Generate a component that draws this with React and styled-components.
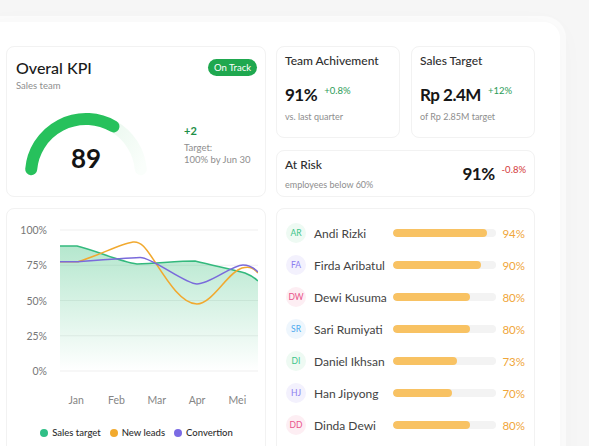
import React from "react";
import styled, { createGlobalStyle } from "styled-components";

const GlobalStyle = createGlobalStyle`
  * { box-sizing: border-box; }
  html, body { margin: 0; padding: 0; }
  body {
    background: #f6f6f6;
    font-family: "Lato", "Noto Sans", sans-serif;
    color: #1c1c1c;
    overflow: hidden;
  }
`;

const members = [
  { initials: "AR", name: "Andi Rizki", value: 94, fill: 90.5, tone: "green" },
  { initials: "FA", name: "Firda Aribatul", value: 90, fill: 85.5, tone: "purple" },
  { initials: "DW", name: "Dewi Kusuma", value: 80, fill: 74, tone: "pink" },
  { initials: "SR", name: "Sari Rumiyati", value: 80, fill: 74, tone: "blue" },
  { initials: "DI", name: "Daniel Ikhsan", value: 73, fill: 61.5, tone: "green" },
  { initials: "HJ", name: "Han Jipyong", value: 70, fill: 56.5, tone: "purple" },
  { initials: "DD", name: "Dinda Dewi", value: 80, fill: 74, tone: "pink" },
];

const tones = {
  green: { bg: "#eefaf3", fg: "#3cc48a" },
  purple: { bg: "#f3f1fd", fg: "#8b7ef0" },
  pink: { bg: "#fdeef3", fg: "#e9558b" },
  blue: { bg: "#eef6fd", fg: "#4aa9ee" },
};

const months = ["Jan", "Feb", "Mar", "Apr", "Mei"];
const yTicks = ["100%", "75%", "50%", "25%", "0%"];

const legend = [
  { label: "Sales target", color: "#2fbf86" },
  { label: "New leads", color: "#f2aa2e" },
  { label: "Convertion", color: "#7b6be4" },
];

export default function App() {
  return (
    <>
      <GlobalStyle />
      <Page>
        <Panel>
          <Board>
            <KpiCard>
              <KpiHeader>
                <div>
                  <KpiTitle>Overal KPI</KpiTitle>
                  <Muted size={9.5}>Sales team</Muted>
                </div>
                <Badge>On Track</Badge>
              </KpiHeader>
              <KpiBody>
                <Gauge>
                  <svg width="130" height="72" viewBox="21 106 130 72">
                    <defs>
                      <linearGradient id="track" x1="0" y1="0" x2="1" y2="1">
                        <stop offset="0" stopColor="#ecf9f0" />
                        <stop offset="1" stopColor="#fafefb" />
                      </linearGradient>
                    </defs>
                    <path
                      d="M113.5 126.4 A55 55 0 0 1 140.8 169.2"
                      fill="none"
                      stroke="url(#track)"
                      strokeWidth="12"
                      strokeLinecap="round"
                    />
                    <path
                      d="M31.2 169.2 A55 55 0 0 1 113.5 126.4"
                      fill="none"
                      stroke="#27c15c"
                      strokeWidth="12"
                      strokeLinecap="round"
                    />
                  </svg>
                  <GaugeValue>89</GaugeValue>
                </Gauge>
                <KpiStats>
                  <Delta>+2</Delta>
                  <Muted size={9.5}>
                    Target:
                    <br />
                    100% by Jun 30
                  </Muted>
                </KpiStats>
              </KpiBody>
            </KpiCard>

            <RightStack>
              <StatRow>
                <StatCard>
                  <CardTitle>Team Achivement</CardTitle>
                  <ValueRow>
                    <BigValue>91%</BigValue>
                    <Change tone="up">+0.8%</Change>
                  </ValueRow>
                  <Muted size={9}>vs. last quarter</Muted>
                </StatCard>
                <StatCard>
                  <CardTitle>Sales Target</CardTitle>
                  <ValueRow>
                    <BigValue>Rp 2.4M</BigValue>
                    <Change tone="up">+12%</Change>
                  </ValueRow>
                  <Muted size={9}>of Rp 2.85M target</Muted>
                </StatCard>
              </StatRow>
              <RiskCard>
                <div>
                  <CardTitle>At Risk</CardTitle>
                  <RiskSub size={9}>employees below 60%</RiskSub>
                </div>
                <ValueRow>
                  <BigValue>91%</BigValue>
                  <Change tone="down">-0.8%</Change>
                </ValueRow>
              </RiskCard>
            </RightStack>

            <ChartCard>
              <Plot>
                <YAxis>
                  {yTicks.map((t) => (
                    <span key={t}>{t}</span>
                  ))}
                </YAxis>
                <svg width="198" height="153" viewBox="60 224 198 153">
                  <defs>
                    <linearGradient id="area" x1="0" y1="0" x2="0" y2="1">
                      <stop offset="0" stopColor="#3cc07e" stopOpacity="0.38" />
                      <stop offset="1" stopColor="#3cc07e" stopOpacity="0" />
                    </linearGradient>
                  </defs>
                  {[230, 265.25, 300.5, 335.75, 371].map((y) => (
                    <line key={y} x1="60" x2="258" y1={y} y2={y} stroke="#efefef" strokeWidth="1" />
                  ))}
                  <path
                    d="M60 246 L77 246 C95 250 120 262 137 264 C160 263 180 261 195 261 C215 266 235 270 245 273 C250 275 254 277 258 281 L258 371 L60 371 Z"
                    fill="url(#area)"
                  />
                  <path
                    d="M60 246 L77 246 C95 250 120 262 137 264 C160 263 180 261 195 261 C215 266 235 270 245 273 C250 275 254 277 258 281"
                    fill="none"
                    stroke="#33b97d"
                    strokeWidth="1.6"
                  />
                  <path
                    d="M60 261.7 L78 261.7 C100 255 120 244 133 242 C142 241 147 250 155 262 C168 282 182 304 197 304 C212 304 228 272 242 268 C250 266 254 268 258 273"
                    fill="none"
                    stroke="#f1a92f"
                    strokeWidth="1.6"
                  />
                  <path
                    d="M60 261.7 L78 261.7 C100 260 125 258 140 257.5 C152 257 185 284 197 284 C210 284 232 265 243 265 C250 265 254 268 258 272"
                    fill="none"
                    stroke="#7a6adb"
                    strokeWidth="1.6"
                  />
                </svg>
              </Plot>
              <XAxis>
                {months.map((m) => (
                  <span key={m}>{m}</span>
                ))}
              </XAxis>
              <Legend>
                {legend.map((l) => (
                  <LegendItem key={l.label}>
                    <Dot color={l.color} />
                    {l.label}
                  </LegendItem>
                ))}
              </Legend>
            </ChartCard>

            <ListCard>
              {members.map((m) => (
                <MemberRow key={m.initials}>
                  <Avatar tone={m.tone}>{m.initials}</Avatar>
                  <MemberName>{m.name}</MemberName>
                  <Track>
                    <Fill style={{ width: `${m.fill}%` }} />
                  </Track>
                  <Percent>{m.value}%</Percent>
                </MemberRow>
              ))}
            </ListCard>
          </Board>
        </Panel>
      </Page>
    </>
  );
}

const Page = styled.div`
  width: 589px;
  height: 446px;
  padding-top: 22px;
  overflow: hidden;
`;

const Panel = styled.div`
  margin-left: -18px;
  width: 578px;
  height: 480px;
  background: #ffffff;
  border-radius: 16px;
  padding: 24px;
  box-shadow: 0 0 0 6px rgba(255, 255, 255, 0.55), 0 6px 28px rgba(0, 0, 0, 0.035);
`;

const Board = styled.div`
  display: grid;
  grid-template-columns: 260px 259px;
  grid-template-rows: 151px 260px;
  column-gap: 10px;
  row-gap: 11px;
`;

const Card = styled.div`
  background: #ffffff;
  border: 1px solid #f2f2f2;
  border-radius: 8px;
`;

const KpiCard = styled(Card)`
  padding: 11px 8px 0 9px;
`;

const KpiHeader = styled.div`
  display: flex;
  justify-content: space-between;
  align-items: flex-start;
`;

const KpiTitle = styled.div`
  font-size: 16px;
  line-height: 20px;
  font-weight: 500;
  color: #1a1a1a;
  margin-bottom: 2px;
`;

const Muted = styled.div`
  font-size: ${(p) => p.size}px;
  line-height: ${(p) => (p.size > 9 ? 12 : 11)}px;
  color: #8e8e8e;
`;

const Badge = styled.div`
  margin-top: 1px;
  height: 17px;
  padding: 0 6px;
  border-radius: 9px;
  background: #1fa84f;
  color: #ffffff;
  font-size: 9.5px;
  line-height: 17px;
`;

const KpiBody = styled.div`
  display: flex;
  align-items: flex-start;
  margin-top: 14px;
`;

const Gauge = styled.div`
  position: relative;
  width: 130px;
  height: 72px;
  margin-left: 5px;

  svg {
    display: block;
  }
`;

const GaugeValue = styled.div`
  position: absolute;
  left: 0;
  right: 0;
  top: 39px;
  text-align: center;
  font-size: 26px;
  line-height: 26px;
  font-weight: 700;
  color: #141414;
`;

const KpiStats = styled.div`
  margin-left: 33px;
  padding-top: 18px;
`;

const Delta = styled.div`
  font-size: 11px;
  line-height: 14px;
  font-weight: 700;
  color: #1e8f48;
  margin-bottom: 4px;
`;

const RightStack = styled.div`
  display: flex;
  flex-direction: column;
  gap: 12px;
`;

const StatRow = styled.div`
  display: grid;
  grid-template-columns: 124px 124px;
  column-gap: 11px;
`;

const StatCard = styled(Card)`
  height: 92px;
  padding: 6px 8px 0;
`;

const CardTitle = styled.div`
  font-size: 12px;
  line-height: 16px;
  font-weight: 500;
  color: #2e2e2e;
`;

const ValueRow = styled.div`
  display: flex;
  align-items: flex-start;
  gap: 7px;

  ${StatCard} & {
    margin: 16px 0 6px;
  }
`;

const BigValue = styled.div`
  font-size: 17px;
  line-height: 20px;
  font-weight: 700;
  color: #161616;
  letter-spacing: -0.5px;
`;

const Change = styled.div`
  font-size: 9.5px;
  line-height: 12px;
  color: ${(p) => (p.tone === "down" ? "#d43a3a" : "#2c9c58")};
`;

const RiskCard = styled(Card)`
  height: 47px;
  padding: 0 8px;
  display: flex;
  align-items: center;
  justify-content: space-between;
`;

const RiskSub = styled(Muted)`
  margin-top: 6px;
`;

const ChartCard = styled(Card)`
  padding: 15px 7px 0 12px;
`;

const Plot = styled.div`
  display: flex;
  gap: 13px;

  svg {
    display: block;
  }
`;

const YAxis = styled.div`
  width: 28px;
  height: 153px;
  display: flex;
  flex-direction: column;
  justify-content: space-between;
  align-items: flex-end;
  font-size: 10.5px;
  line-height: 12px;
  color: #777777;
`;

const XAxis = styled.div`
  display: grid;
  grid-template-columns: repeat(5, 40.3px);
  margin: 17px 0 0 37px;
  font-size: 10.5px;
  line-height: 12px;
  color: #858585;
  text-align: center;
`;

const Legend = styled.div`
  display: flex;
  justify-content: center;
  gap: 9px;
  margin-top: 21px;
  padding-right: 4px;
`;

const LegendItem = styled.div`
  display: flex;
  align-items: center;
  gap: 4px;
  font-size: 9.5px;
  line-height: 12px;
  font-weight: 500;
  color: #2e2e2e;
`;

const Dot = styled.span`
  width: 8px;
  height: 8px;
  border-radius: 50%;
  background: ${(p) => p.color};
`;

const ListCard = styled(Card)`
  padding: 8px 9px;
`;

const MemberRow = styled.div`
  height: 32px;
  display: flex;
  align-items: center;
`;

const Avatar = styled.div`
  width: 20px;
  height: 20px;
  border-radius: 50%;
  flex: none;
  display: flex;
  align-items: center;
  justify-content: center;
  font-size: 8.5px;
  background: ${(p) => tones[p.tone].bg};
  color: ${(p) => tones[p.tone].fg};
`;

const MemberName = styled.div`
  width: 80px;
  margin-left: 8px;
  font-size: 12px;
  color: #434343;
  white-space: nowrap;
`;

const Track = styled.div`
  width: 104px;
  height: 8px;
  border-radius: 4px;
  background: #f3f3f3;
  overflow: hidden;
`;

const Fill = styled.div`
  height: 100%;
  border-radius: 4px;
  background: #f8c263;
`;

const Percent = styled.div`
  margin-left: 6px;
  font-size: 11.5px;
  color: #f0a63a;
`;
